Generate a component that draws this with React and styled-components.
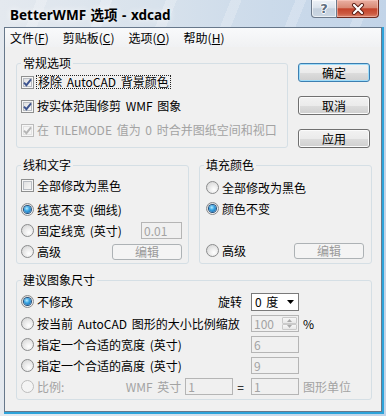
import styled, { createGlobalStyle, css } from 'styled-components';

const GlobalStyle = createGlobalStyle`
  html, body {
    margin: 0;
    padding: 0;
    background: #ffffff;
  }
  body {
    font-family: "Noto Sans CJK SC", "Noto Sans", sans-serif;
    font-size: 12px;
    color: #000;
  }
  * {
    box-sizing: border-box;
  }
`;

const Window = styled.div`
  width: 386px;
  height: 416px;
  display: flex;
  flex-direction: column;
  overflow: hidden;
  background: linear-gradient(90deg, #e4e9ef 0%, #d8e2ec 40%, #cbdaea 70%, #c2d4e8 100%);
`;

const TitleBar = styled.div`
  flex: none;
  height: 27px;
  display: flex;
  justify-content: space-between;
  align-items: flex-start;
  padding: 0 7px 0 10px;
  background: repeating-linear-gradient(
    112deg,
    rgba(255, 255, 255, 0) 0 34px,
    rgba(255, 255, 255, 0.22) 34px 44px,
    rgba(255, 255, 255, 0) 44px 60px
  );
`;

const TitleText = styled.div`
  padding-top: 6px;
  line-height: 18px;
  font-family: "Noto Sans", "Noto Sans CJK SC", sans-serif;
  font-size: 13.5px;
  font-weight: 700;
  word-spacing: 1px;
  color: #000;
  text-shadow: 0 0 6px rgba(255, 255, 255, 0.95);
  white-space: nowrap;
`;

const CaptionButtons = styled.div`
  display: flex;
`;

const CaptionButton = styled.div`
  width: ${(p) => p.$w}px;
  height: 18px;
  display: flex;
  align-items: center;
  justify-content: center;
  border: 1px solid ${(p) => (p.$close ? '#6e2a1f' : '#6c7a8b')};
  border-top: none;
  ${(p) =>
    p.$close
      ? css`
          border-left: none;
          border-radius: 0 0 4px 0;
          background: linear-gradient(#eab0a3 0%, #d98a76 45%, #c4432b 52%, #cc5a41 80%, #d9836c 100%);
          box-shadow: inset 0 0 0 1px rgba(255, 210, 200, 0.5);
        `
      : css`
          border-radius: 0 0 0 4px;
          background: linear-gradient(#eef2f7 0%, #dbe3ec 45%, #c4d0dd 52%, #cbd7e3 100%);
          box-shadow: inset 0 0 0 1px rgba(255, 255, 255, 0.6);
        `}
`;

const HelpGlyph = styled.span`
  font-family: "DejaVu Sans", sans-serif;
  font-weight: 700;
  font-size: 13px;
  line-height: 14px;
  color: #5e6e80;
  text-shadow: 1px 0 0 #fff, -1px 0 0 #fff, 0 1px 0 #fff, 0 -1px 0 #fff;
`;

const Frame = styled.div`
  flex: 1;
  display: flex;
  margin: 0 2px 2px 4px;
  border-right: 2px solid #2ea3da;
  border-bottom: 2px solid #2ea3da;
`;

const Client = styled.div`
  flex: 1;
  display: flex;
  flex-direction: column;
  border: 1px solid #67788b;
  background: #f0f0f0;
`;

const MenuBar = styled.div`
  flex: none;
  height: 19px;
  display: flex;
  gap: 14px;
  padding-left: 5px;
  line-height: 19px;
  background: linear-gradient(#f9fafb, #f0f1f3);
`;

const MenuItem = styled.span`
  white-space: nowrap;
`;

const Key = styled.span`
  text-decoration: underline;
`;

const Content = styled.div`
  display: flex;
  flex-direction: column;
  padding: 10px 9px 0 11px;
`;

const TopRow = styled.div`
  display: flex;
  align-items: flex-start;
  gap: 10px;
`;

const MidRow = styled.div`
  display: flex;
  gap: 10px;
  margin-top: 11px;
`;

const Group = styled.fieldset`
  margin: ${(p) => p.$mt || 0}px 0 0 0;
  padding: 0;
  min-width: 0;
  flex: ${(p) => (p.$w ? 'none' : 1)};
  width: ${(p) => (p.$w ? `${p.$w}px` : 'auto')};
  border: 1px solid #d5dfe5;
  border-radius: 3px;
`;

const Legend = styled.legend`
  margin-left: 4px;
  padding: 0 2px;
  line-height: 12px;
  font-size: 12px;
`;

const GroupBody = styled.div`
  display: flex;
  flex-direction: column;
  padding: ${(p) => p.$pad};
`;

const Row = styled.div`
  display: flex;
  align-items: center;
  height: ${(p) => p.$h || 21}px;
  margin-bottom: ${(p) => p.$mb || 0}px;
`;

const Choice = styled.label`
  display: inline-flex;
  align-items: center;
  gap: 3px;
  line-height: 12px;
  word-spacing: 2px;
  white-space: nowrap;
  color: ${(p) => (p.$disabled ? '#a3a3a3' : '#000')};
`;

const FocusText = styled.span`
  border: 1px dotted #222;
  padding: 0 1px;
  margin-left: -1px;
`;

const BoxMark = styled.span`
  flex: none;
  width: 13px;
  height: 13px;
  display: inline-flex;
  align-items: center;
  justify-content: center;
  border: 1px solid ${(p) => (p.$disabled ? '#bcbcbc' : '#8e8f8f')};
  background: ${(p) =>
    p.$disabled ? '#f4f4f4' : 'linear-gradient(135deg, #d9dadb 0%, #eeeeee 55%, #fbfbfb 100%)'};
  box-shadow: inset 0 0 0 1px #f6f6f6, inset 0 0 0 2px ${(p) => (p.$disabled ? '#e2e2e2' : '#b8bcc2')};
`;

const RadioMark = styled.span`
  flex: none;
  width: 13px;
  height: 13px;
  border-radius: 50%;
  display: inline-flex;
  align-items: center;
  justify-content: center;
  border: 1px solid ${(p) => (p.$disabled ? '#bdbdbd' : '#8b8c8d')};
  background: ${(p) =>
    p.$disabled
      ? '#f4f4f4'
      : 'radial-gradient(circle at 62% 68%, #ffffff 0%, #eaeaea 45%, #cfcfcf 100%)'};
  &::after {
    content: '';
    display: ${(p) => (p.$checked ? 'block' : 'none')};
    width: 7px;
    height: 7px;
    border-radius: 50%;
    background: radial-gradient(circle at 40% 35%, #b9ecff 0%, #3aa6e4 40%, #11569a 100%);
    box-shadow: 0 0 0 1px #234f7c;
  }
`;

const ButtonColumn = styled.div`
  display: flex;
  flex-direction: column;
  gap: 14px;
  margin-top: 6px;
`;

const Button = styled.button`
  width: ${(p) => p.$w || 72}px;
  height: ${(p) => p.$h || 19}px;
  margin: 0;
  padding: 0;
  font: inherit;
  font-size: 12px;
  line-height: 12px;
  color: #000;
  border: 1px solid #707070;
  border-radius: 3px;
  background: linear-gradient(#f2f2f2 0%, #ebebeb 50%, #dddddd 51%, #cfcfcf 100%);
  box-shadow: inset 0 0 0 1px #fbfbfb;
  ${(p) =>
    p.$default &&
    css`
      border-color: #3c7fb1;
      box-shadow: inset 0 0 0 1px #9fdcf9;
    `}
  &:disabled {
    color: #9a9a9a;
    border-color: #adb2b5;
    background: #f4f4f4;
    box-shadow: none;
  }
`;

const PushRight = styled.div`
  margin-left: auto;
  display: flex;
`;

const Field = styled.input`
  width: ${(p) => p.$w || 48}px;
  height: 17px;
  margin: 0;
  padding: 0 2px;
  font: inherit;
  font-size: 12px;
  line-height: 15px;
  color: #a3a3a3;
  background: #f0f0f0;
  border: 1px solid #b5b5b5;
  outline: none;
`;

const SizeRow = styled.div`
  display: grid;
  grid-template-columns: 226px 48px 1fr;
  column-gap: 4px;
  align-items: center;
  height: 21px;
  margin-bottom: ${(p) => p.$mb || 0}px;
`;

const RowLead = styled.div`
  display: flex;
  align-items: center;
  justify-content: space-between;
  padding-right: ${(p) => p.$pr || 0}px;
`;

const Inline = styled.div`
  display: flex;
  align-items: center;
  gap: ${(p) => p.$gap || 0}px;
  line-height: 12px;
  word-spacing: 2px;
  white-space: nowrap;
  color: ${(p) => (p.$muted ? '#a3a3a3' : '#000')};
`;

const Combo = styled.div`
  width: 48px;
  height: 18px;
  display: flex;
  align-items: center;
  justify-content: space-between;
  padding: 0 4px 0 3px;
  line-height: 12px;
  word-spacing: 2px;
  background: #fff;
  border: 1px solid #7a7a7a;
`;

const Spin = styled.div`
  width: 48px;
  height: 17px;
  display: flex;
  align-items: stretch;
  padding: 0 1px 0 2px;
  color: #a3a3a3;
  background: #f0f0f0;
  border: 1px solid #b5b5b5;
`;

const SpinText = styled.span`
  flex: 1;
  line-height: 15px;
`;

const SpinButtons = styled.div`
  width: 15px;
  display: flex;
  flex-direction: column;
  padding: 1px 0;
`;

const SpinButton = styled.div`
  flex: 1;
  display: flex;
  align-items: center;
  justify-content: center;
  border: 1px solid #cacaca;
  border-radius: 1px;
  background: linear-gradient(#f7f7f7, #e7e7e7);
`;

const Suffix = styled.span`
  line-height: 12px;
  color: ${(p) => (p.$muted ? '#a3a3a3' : '#000')};
  white-space: nowrap;
`;

function Check({ checked, disabled }) {
  return (
    <BoxMark $disabled={disabled}>
      {checked && (
        <svg width="9" height="9" viewBox="0 0 9 9">
          <path
            d="M1 4.6 L3.4 7.2 L8 1.4"
            fill="none"
            stroke={disabled ? '#b5b5b5' : '#3d548f'}
            strokeWidth="1.9"
          />
        </svg>
      )}
    </BoxMark>
  );
}

function Radio({ checked, disabled }) {
  return <RadioMark $checked={checked} $disabled={disabled} />;
}

function Arrow({ up, color = '#000', w = 7, h = 4 }) {
  return (
    <svg width={w} height={h} viewBox="0 0 7 4">
      <path d={up ? 'M0 4 H7 L3.5 0 Z' : 'M0 0 H7 L3.5 4 Z'} fill={color} />
    </svg>
  );
}

export default function App() {
  return (
    <>
      <GlobalStyle />
      <Window>
        <TitleBar>
          <TitleText>BetterWMF 选项 - xdcad</TitleText>
          <CaptionButtons>
            <CaptionButton $w={26}>
              <HelpGlyph>?</HelpGlyph>
            </CaptionButton>
            <CaptionButton $w={42} $close>
              <svg width="14" height="12" viewBox="0 0 14 12">
                <path d="M3 2 L11 10 M11 2 L3 10" stroke="#5a1d14" strokeWidth="4" strokeLinecap="round" />
                <path d="M3 2 L11 10 M11 2 L3 10" stroke="#ffffff" strokeWidth="2.2" strokeLinecap="round" />
              </svg>
            </CaptionButton>
          </CaptionButtons>
        </TitleBar>
        <Frame>
          <Client>
            <MenuBar>
              <MenuItem>文件(<Key>F</Key>)</MenuItem>
              <MenuItem>剪贴板(<Key>C</Key>)</MenuItem>
              <MenuItem>选项(<Key>O</Key>)</MenuItem>
              <MenuItem>帮助(<Key>H</Key>)</MenuItem>
            </MenuBar>
            <Content>
              <TopRow>
                <Group $w={272}>
                  <Legend>常规选项</Legend>
                  <GroupBody $pad="1px 4px 5px 4px">
                    <Row $h={24}>
                      <Choice>
                        <Check checked />
                        <FocusText>移除 AutoCAD 背景颜色</FocusText>
                      </Choice>
                    </Row>
                    <Row $h={24}>
                      <Choice>
                        <Check checked />
                        按实体范围修剪 WMF 图象
                      </Choice>
                    </Row>
                    <Row $h={24}>
                      <Choice $disabled>
                        <Check checked disabled />
                        在 TILEMODE 值为 0 时合并图纸空间和视口
                      </Choice>
                    </Row>
                  </GroupBody>
                </Group>
                <ButtonColumn>
                  <Button $default>确定</Button>
                  <Button>取消</Button>
                  <Button>应用</Button>
                </ButtonColumn>
              </TopRow>

              <MidRow>
                <Group>
                  <Legend>线和文字</Legend>
                  <GroupBody $pad="4px 6px 1px 4px">
                    <Row $mb={3}>
                      <Choice>
                        <Check />
                        全部修改为黑色
                      </Choice>
                    </Row>
                    <Row>
                      <Choice>
                        <Radio checked />
                        线宽不变 (细线)
                      </Choice>
                    </Row>
                    <Row>
                      <Choice>
                        <Radio />
                        固定线宽 (英寸)
                      </Choice>
                      <PushRight>
                        <Field $w={41} disabled defaultValue="0.01" />
                      </PushRight>
                    </Row>
                    <Row>
                      <Choice>
                        <Radio />
                        高级
                      </Choice>
                      <PushRight>
                        <Button $w={70} $h={16} disabled>
                          编辑
                        </Button>
                      </PushRight>
                    </Row>
                  </GroupBody>
                </Group>
                <Group>
                  <Legend>填充颜色</Legend>
                  <GroupBody $pad="6px 7px 1px 6px">
                    <Row>
                      <Choice>
                        <Radio />
                        全部修改为黑色
                      </Choice>
                    </Row>
                    <Row $mb={21}>
                      <Choice>
                        <Radio checked />
                        颜色不变
                      </Choice>
                    </Row>
                    <Row>
                      <Choice>
                        <Radio />
                        高级
                      </Choice>
                      <PushRight>
                        <Button $w={70} $h={16} disabled>
                          编辑
                        </Button>
                      </PushRight>
                    </Row>
                  </GroupBody>
                </Group>
              </MidRow>

              <Group $mt={10}>
                <Legend>建议图象尺寸</Legend>
                <GroupBody $pad="5px 0 2px 4px">
                  <SizeRow $mb={1}>
                    <RowLead $pr={5}>
                      <Choice>
                        <Radio checked />
                        不修改
                      </Choice>
                      <Inline>旋转</Inline>
                    </RowLead>
                    <Combo>
                      <span>0 度</span>
                      <Arrow />
                    </Combo>
                  </SizeRow>
                  <SizeRow>
                    <RowLead>
                      <Choice>
                        <Radio />
                        按当前 AutoCAD 图形的大小比例缩放
                      </Choice>
                    </RowLead>
                    <Spin>
                      <SpinText>100</SpinText>
                      <SpinButtons>
                        <SpinButton>
                          <Arrow up color="#a8a8a8" w={5} h={3} />
                        </SpinButton>
                        <SpinButton>
                          <Arrow color="#a8a8a8" w={5} h={3} />
                        </SpinButton>
                      </SpinButtons>
                    </Spin>
                    <Suffix>%</Suffix>
                  </SizeRow>
                  <SizeRow>
                    <RowLead>
                      <Choice>
                        <Radio />
                        指定一个合适的宽度 (英寸)
                      </Choice>
                    </RowLead>
                    <Field disabled defaultValue="6" />
                  </SizeRow>
                  <SizeRow>
                    <RowLead>
                      <Choice>
                        <Radio />
                        指定一个合适的高度 (英寸)
                      </Choice>
                    </RowLead>
                    <Field disabled defaultValue="9" />
                  </SizeRow>
                  <SizeRow>
                    <RowLead $pr={3}>
                      <Choice $disabled>
                        <Radio disabled />
                        比例:
                      </Choice>
                      <Inline $gap={4} $muted>
                        <span>WMF 英寸</span>
                        <Field disabled defaultValue="1" />
                        <Suffix>=</Suffix>
                      </Inline>
                    </RowLead>
                    <Field disabled defaultValue="1" />
                    <Suffix $muted>图形单位</Suffix>
                  </SizeRow>
                </GroupBody>
              </Group>
            </Content>
          </Client>
        </Frame>
      </Window>
    </>
  );
}
